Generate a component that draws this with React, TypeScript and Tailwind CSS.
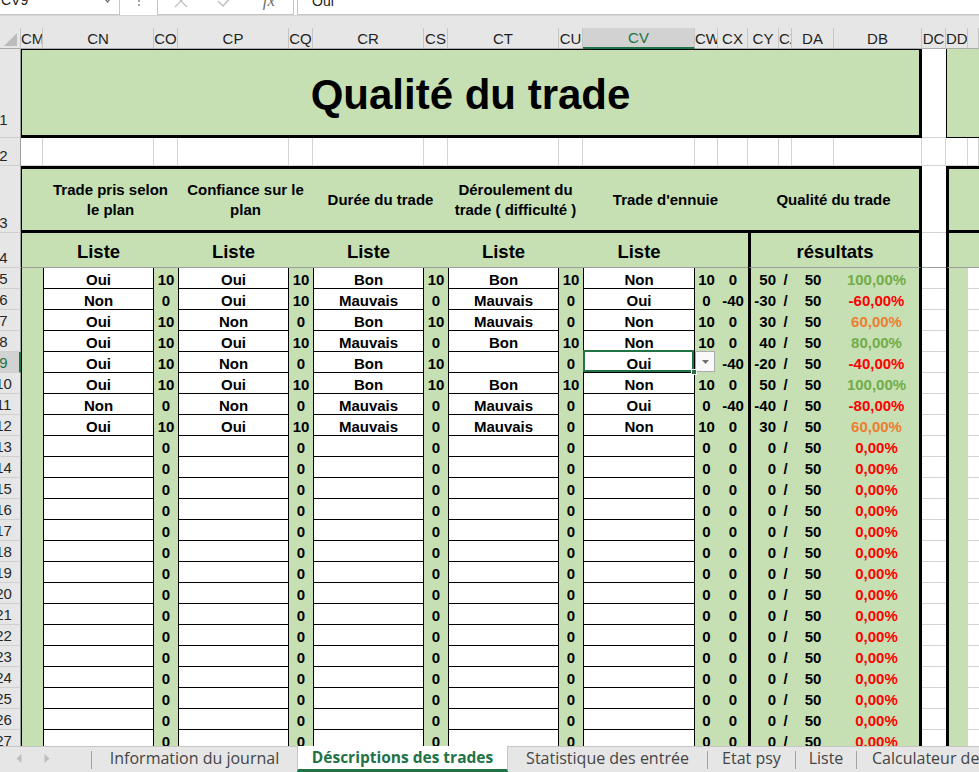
import React from "react";
import clsx from "clsx";

type Tone = "good" | "mid" | "bad";

interface Trade {
  cn: string;
  co: string;
  cp: string;
  cq: string;
  cr: string;
  cs: string;
  ct: string;
  cu: string;
  cv: string;
  cw: string;
  cx: string;
  cy: string;
  pct: string;
  tone: Tone;
}

const filled: Trade[] = [
  { cn: "Oui", co: "10", cp: "Oui", cq: "10", cr: "Bon", cs: "10", ct: "Bon", cu: "10", cv: "Non", cw: "10", cx: "0", cy: "50", pct: "100,00%", tone: "good" },
  { cn: "Non", co: "0", cp: "Oui", cq: "10", cr: "Mauvais", cs: "0", ct: "Mauvais", cu: "0", cv: "Oui", cw: "0", cx: "-40", cy: "-30", pct: "-60,00%", tone: "bad" },
  { cn: "Oui", co: "10", cp: "Non", cq: "0", cr: "Bon", cs: "10", ct: "Mauvais", cu: "0", cv: "Non", cw: "10", cx: "0", cy: "30", pct: "60,00%", tone: "mid" },
  { cn: "Oui", co: "10", cp: "Oui", cq: "10", cr: "Mauvais", cs: "0", ct: "Bon", cu: "10", cv: "Non", cw: "10", cx: "0", cy: "40", pct: "80,00%", tone: "good" },
  { cn: "Oui", co: "10", cp: "Non", cq: "0", cr: "Bon", cs: "10", ct: "", cu: "0", cv: "Oui", cw: "0", cx: "-40", cy: "-20", pct: "-40,00%", tone: "bad" },
  { cn: "Oui", co: "10", cp: "Oui", cq: "10", cr: "Bon", cs: "10", ct: "Bon", cu: "10", cv: "Non", cw: "10", cx: "0", cy: "50", pct: "100,00%", tone: "good" },
  { cn: "Non", co: "0", cp: "Non", cq: "0", cr: "Mauvais", cs: "0", ct: "Mauvais", cu: "0", cv: "Oui", cw: "0", cx: "-40", cy: "-40", pct: "-80,00%", tone: "bad" },
  { cn: "Oui", co: "10", cp: "Oui", cq: "10", cr: "Mauvais", cs: "0", ct: "Mauvais", cu: "0", cv: "Non", cw: "10", cx: "0", cy: "30", pct: "60,00%", tone: "mid" },
];

const blank: Trade = {
  cn: "", co: "0", cp: "", cq: "0", cr: "", cs: "0", ct: "", cu: "0", cv: "", cw: "0", cx: "0", cy: "0", pct: "0,00%", tone: "bad",
};

const trades: Trade[] = [...filled, ...Array.from({ length: 15 }, () => blank)];

const toneClass: Record<Tone, string> = {
  good: "text-[#70ad47]",
  mid: "text-[#ed7d31]",
  bad: "text-[#ff0000]",
};

const LETTERS = ["CM", "CN", "CO", "CP", "CQ", "CR", "CS", "CT", "CU", "CV", "CW", "CX", "CY", "CZ", "DA", "DB", "DC", "DD", ""];

// body text colour is inherited (black) so that tone classes can override it
const cellBase = "flex items-center justify-center pt-[2px] font-bold text-[15px] leading-none whitespace-nowrap";

function ColHead({ label, active }: { label: string; active?: boolean }) {
  return (
    <div
      className={clsx(
        "flex items-center overflow-hidden border-r border-b text-[15px] leading-none",
        active
          ? "bg-[#d2d2d2] text-[#217346] border-r-[#c6c6c6] border-b-2 border-b-[#217346]"
          : "bg-[#e6e6e6] text-[#1f1f1f] border-r-[#c6c6c6] border-b-[#ababab]"
      )}
    >
      <span className="mx-auto shrink-0">{label}</span>
    </div>
  );
}

function RowHead({ n, active, pad }: { n: number; active?: boolean; pad?: string }) {
  return (
    <div
      className={clsx(
        "flex items-end overflow-hidden border-b border-b-[#cfcfcf]",
        active
          ? "bg-[#d2d2d2] text-[#217346] border-r-2 border-r-[#217346]"
          : "bg-[#e6e6e6] text-[#262626] border-r border-r-[#9e9e9e]",
        pad
      )}
    >
      <span className="w-[35px] -ml-[14px] shrink-0 text-center text-[15px] leading-[18px]">{n}</span>
    </div>
  );
}

function White({ children, className }: { children?: React.ReactNode; className?: string }) {
  return <div className={clsx(cellBase, "bg-white border-x border-b border-black", className)}>{children}</div>;
}

function Green({ children, className }: { children?: React.ReactNode; className?: string }) {
  return <div className={clsx(cellBase, "bg-[#c6e0b4]", className)}>{children}</div>;
}

function Plain({ className }: { className?: string }) {
  return <div className={clsx("bg-white border-b border-[#d4d4d4]", className)} />;
}

function FormulaBar() {
  return (
    <div className="h-[16px] shrink-0 flex items-end overflow-hidden bg-white border-b border-[#d5d5d5]">
      <div className="relative h-[28px] w-[120px] shrink-0 flex items-center border-r border-b border-[#c6c6c6] pl-[1px] text-[14px] text-[#222]">
        <span>CV9</span>
        <svg className="absolute right-[8px] top-[11px]" width="7" height="5" viewBox="0 0 7 5">
          <path d="M0.5 0.5 L3.5 4 L6.5 0.5" fill="none" stroke="#666" strokeWidth="1.2" />
        </svg>
      </div>
      <div className="h-[28px] w-[37px] shrink-0 flex items-center justify-center">
        <div className="flex flex-col gap-[2px]">
          <span className="w-[2px] h-[2px] bg-[#a6a6a6]" />
          <span className="w-[2px] h-[2px] bg-[#a6a6a6]" />
          <span className="w-[2px] h-[2px] bg-[#a6a6a6]" />
        </div>
      </div>
      <div className="h-[28px] w-[137px] shrink-0 flex items-center border border-[#c6c6c6] px-px">
        <div className="w-[44px] flex justify-center">
          <svg width="14" height="14" viewBox="0 0 14 14">
            <path d="M1 1 L13 13 M13 1 L1 13" stroke="#c4c4c4" strokeWidth="1.4" fill="none" />
          </svg>
        </div>
        <div className="w-[44px] flex justify-center">
          <svg width="16" height="12" viewBox="0 0 16 12">
            <path d="M1 6 L6 11 L15 1" stroke="#c4c4c4" strokeWidth="1.6" fill="none" />
          </svg>
        </div>
        <div className="w-[44px] flex justify-center">
          <span className="font-['Liberation_Serif',serif] italic text-[17px] text-[#6f6f6f]">fx</span>
        </div>
      </div>
      <div className="w-[3px] shrink-0" />
      <div className="h-[28px] flex-1 flex items-center border border-r-0 border-[#c6c6c6] pl-[14px] text-[14px] text-[#222]">
        Oui
      </div>
    </div>
  );
}

function TabSep() {
  return <div className="w-px h-[18px] self-center bg-[#a3a3a3] shrink-0" />;
}

function SheetTabs() {
  return (
    <div className="h-[26px] shrink-0 flex items-stretch bg-[#e6e6e6] border-t border-[#c6c6c6] font-['Open_Sans',sans-serif] text-[16px] text-[#444]">
      <div className="w-[91px] shrink-0 flex items-center pb-[2px]">
        <svg className="ml-[16px]" width="6" height="9" viewBox="0 0 6 9">
          <path d="M5.5 0 L0.5 4.5 L5.5 9 Z" fill="#bdbdbd" />
        </svg>
        <svg className="ml-[22px]" width="6" height="9" viewBox="0 0 6 9">
          <path d="M0.5 0 L5.5 4.5 L0.5 9 Z" fill="#bdbdbd" />
        </svg>
      </div>
      <TabSep />
      <div className="w-[205px] shrink-0 flex items-center justify-center pb-[3px] whitespace-nowrap">Information du journal</div>
      <div className="w-[211px] shrink-0 -mt-px flex items-center justify-center whitespace-nowrap bg-white border-x border-[#c6c6c6] border-b-[3px] border-b-[#217346] font-bold text-[15.5px] text-[#217346]">
        Déscriptions des trades
      </div>
      <div className="w-[199px] shrink-0 flex items-center justify-center pb-[3px] whitespace-nowrap">Statistique des entrée</div>
      <TabSep />
      <div className="w-[87px] shrink-0 flex items-center justify-center pb-[3px] whitespace-nowrap">Etat psy</div>
      <TabSep />
      <div className="w-[60px] shrink-0 flex items-center justify-center pb-[3px] whitespace-nowrap">Liste</div>
      <TabSep />
      <div className="flex-1 flex items-center pl-[15px] pb-[3px] whitespace-nowrap overflow-hidden">Calculateur de risque</div>
    </div>
  );
}

function TradeRow({ t, n }: { t: Trade; n: number }) {
  const selected = n === 9;
  return (
    <>
      <RowHead n={n} active={selected} />
      <Green className="border-l border-l-black" />
      <White>{t.cn}</White>
      <Green>{t.co}</Green>
      <White>{t.cp}</White>
      <Green>{t.cq}</Green>
      <White>{t.cr}</White>
      <Green>{t.cs}</Green>
      <White>{t.ct}</White>
      <Green>{t.cu}</Green>
      <White className="relative">
        {t.cv}
        {selected && (
          <>
            <div className="absolute -top-[2px] -left-px right-0 bottom-0 border-2 border-[#217346] pointer-events-none" />
            <div className="absolute -right-[3px] -bottom-[3px] w-[6px] h-[6px] bg-[#217346] border border-white z-20" />
            <div className="absolute left-full -top-px ml-[1px] w-[20px] h-[21px] z-10 flex items-center justify-center bg-[#f9f9f9] border border-[#ababab]">
              <svg width="7" height="4" viewBox="0 0 7 4">
                <path d="M0 0 L7 0 L3.5 4 Z" fill="#707070" />
              </svg>
            </div>
          </>
        )}
      </White>
      <Green>{t.cw}</Green>
      <Green>{t.cx}</Green>
      <Green className="justify-end pr-[3px] border-l-[3px] border-l-black">{t.cy}</Green>
      <Green>/</Green>
      <Green>50</Green>
      <Green className={clsx("border-r-[3px] border-r-black", toneClass[t.tone])}>{t.pct}</Green>
      <Plain />
      <div className="bg-[#c6e0b4] border-l-[3px] border-black" />
      <Plain />
    </>
  );
}

export default function App() {
  const headerCell = "bg-[#c6e0b4] flex items-center justify-center text-center font-bold text-[15px] leading-[20px] border-t-[3px] border-b-[3px] border-black";
  const listeCell = "bg-[#c6e0b4] flex items-center justify-center pt-[4px] font-bold text-[18.5px] leading-none border-b border-b-[#9e9e9e]";
  const freeze = "border-b border-b-[#9e9e9e]";

  return (
    <div className="w-[979px] h-[772px] overflow-hidden flex flex-col bg-white text-black font-['Liberation_Sans',Arial,sans-serif]">
      <FormulaBar />
      <div className="flex-1 flex flex-col overflow-hidden bg-[#e6e6e6]">
        <div className="h-[12px] shrink-0" />
        <div className="grid grid-cols-[21px_22px_111px_24px_111px_24px_111px_24px_111px_24px_112px_23px_30px_31px_13px_42px_88px_24px_22px_1fr] grid-rows-[21px_89px_28px_67px_35px_repeat(23,21px)]">
          {/* column letters */}
          <div className="relative bg-[#e6e6e6] border-r border-b border-r-[#c6c6c6] border-b-[#ababab]">
            <svg className="absolute left-[3px] top-[4px]" width="15" height="15" viewBox="0 0 15 15">
              <path d="M14 1 L14 14 L1 14 Z" fill="#bcbcbc" />
            </svg>
          </div>
          {LETTERS.map((l, i) => (
            <ColHead key={i} label={l} active={l === "CV"} />
          ))}

          {/* row 1: title */}
          <RowHead n={1} pad="pb-[8px]" />
          <div className="col-span-16 bg-[#c6e0b4] border-l border-t border-black border-r-[3px] border-b-[3px] flex items-center justify-center pt-[4px]">
            <span className="text-[42px] font-bold leading-none">Qualité du trade</span>
          </div>
          <Plain />
          <div className="col-span-2 bg-[#c6e0b4] border-l border-b border-black" />

          {/* row 2: spacer */}
          <RowHead n={2} />
          {Array.from({ length: 19 }, (_, i) => (
            <div key={i} className="bg-white border-r border-b border-[#d4d4d4]" />
          ))}

          {/* row 3: criteria */}
          <RowHead n={3} />
          <div className={clsx(headerCell, "border-l")} />
          <div className={clsx(headerCell, "col-span-2")}>
            Trade pris selon
            <br />
            le plan
          </div>
          <div className={clsx(headerCell, "col-span-2")}>
            Confiance sur le
            <br />
            plan
          </div>
          <div className={clsx(headerCell, "col-span-2")}>Durée du trade</div>
          <div className={clsx(headerCell, "col-span-2")}>
            Déroulement du
            <br />
            trade ( difficulté )
          </div>
          <div className={clsx(headerCell, "col-span-3")}>Trade d'ennuie</div>
          <div className={clsx(headerCell, "col-span-4 border-r-[3px]")}>Qualité du trade</div>
          <Plain />
          <div className="col-span-2 bg-[#c6e0b4] border-l-[3px] border-t-[3px] border-b-[3px] border-black" />

          {/* row 4: sources */}
          <RowHead n={4} />
          <div className={clsx(listeCell, "border-l border-l-black")} />
          <div className={listeCell}>Liste</div>
          <div className={listeCell} />
          <div className={listeCell}>Liste</div>
          <div className={listeCell} />
          <div className={listeCell}>Liste</div>
          <div className={listeCell} />
          <div className={listeCell}>Liste</div>
          <div className={listeCell} />
          <div className={listeCell}>Liste</div>
          <div className={listeCell} />
          <div className={listeCell} />
          <div className={clsx(listeCell, "col-span-4 border-l-[3px] border-r-[3px] border-l-black border-r-black")}>résultats</div>
          <div className={clsx("bg-white", freeze)} />
          <div className={clsx("col-span-2 bg-[#c6e0b4] border-l-[3px] border-l-black", freeze)} />

          {/* rows 5-27: trades */}
          {trades.map((t, i) => (
            <TradeRow key={i} t={t} n={i + 5} />
          ))}
        </div>
      </div>
      <SheetTabs />
    </div>
  );
}
